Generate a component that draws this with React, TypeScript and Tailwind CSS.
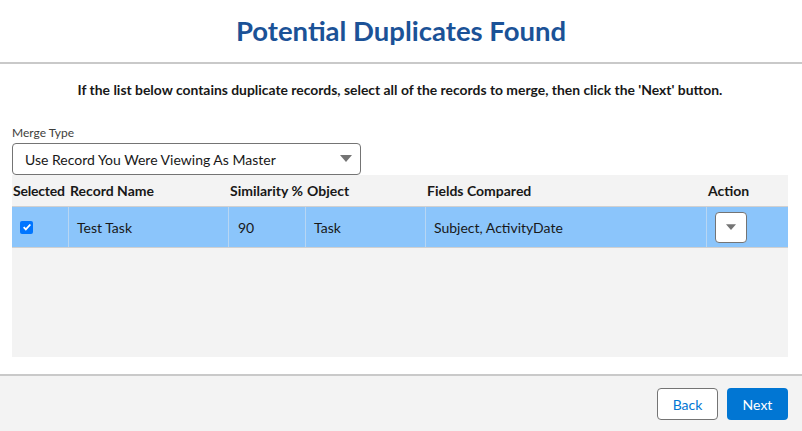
import React, { useState } from "react";

function Caret({ className = "" }: { className?: string }) {
  return (
    <svg viewBox="0 0 12 8" className={className}>
      <path d="M0 0h12L6 7z" fill="#747474" />
    </svg>
  );
}

export default function App() {
  const [selected, setSelected] = useState(true);

  return (
    <div className="w-[802px] h-[431px] flex flex-col bg-white text-[#181818] font-['Lato',sans-serif]">
      {/* Header */}
      <div className="h-[64px] flex items-center justify-center border-b-2 border-[#c9c9c9] shrink-0">
        <h1 className="text-[27.5px] font-bold text-[#1b5297] leading-none">
          Potential Duplicates Found
        </h1>
      </div>

      {/* Body */}
      <div className="flex-1 flex flex-col pl-[12px] pr-[14px]">
        <p className="text-[13.9px] font-bold text-center mt-[18px] mb-[28px] leading-[16px]">
          If the list below contains duplicate records, select all of the records to merge, then click the 'Next' button.
        </p>

        <label className="text-[12px] text-[#3e3e3c] leading-[14px] mb-[3px]">Merge Type</label>
        <div className="w-[349px] h-[32px] border border-[#747474] rounded-[4px] flex items-center justify-between pl-[12px] pr-[8px]">
          <span className="text-[14px]">Use Record You Were Viewing As Master</span>
          <Caret className="w-[12px] h-[8px]" />
        </div>

        {/* Table */}
        <div className="h-[182px] bg-[#f3f3f3]">
          <div className="h-[32px] grid grid-cols-[57px_160px_77px_120px_281px_1fr] items-center text-[14px] font-bold border-b border-[#d0d0d0]">
            <div className="pl-[1px] tracking-[-0.2px]">Selected</div>
            <div className="pl-[1px]">Record Name</div>
            <div className="pl-[1px] whitespace-nowrap">Similarity %</div>
            <div className="pl-[1px]">Object</div>
            <div className="pl-[1px]">Fields Compared</div>
            <div className="pl-[1px]">Action</div>
          </div>
          <div className="h-[41px] grid grid-cols-[57px_160px_77px_120px_281px_1fr] bg-[#8bc5fb] border-b border-[#d0d0d0] text-[14px]">
            <div className="flex items-center pl-[8px] border-r border-[#b7d6f3]">
              <button
                onClick={() => setSelected(!selected)}
                className={`w-[13px] h-[13px] rounded-[2px] flex items-center justify-center ${selected ? "bg-[#0075ff]" : "bg-white border border-[#767676]"}`}
              >
                {selected && (
                  <svg viewBox="0 0 12 12" className="w-[10px] h-[10px]">
                    <path d="M2 6.2l2.6 2.6L10 3" fill="none" stroke="white" strokeWidth="2.2" />
                  </svg>
                )}
              </button>
            </div>
            <div className="flex items-center pl-[8px] border-r border-[#b7d6f3]">Test Task</div>
            <div className="flex items-center pl-[9px] border-r border-[#b7d6f3]">90</div>
            <div className="flex items-center pl-[8px] border-r border-[#b7d6f3]">Task</div>
            <div className="flex items-center pl-[8px] border-r border-[#b7d6f3]">Subject, ActivityDate</div>
            <div className="flex items-center pl-[8px]">
              <button className="w-[32px] h-[31px] bg-white border border-[#747474] rounded-[4px] flex items-center justify-center">
                <Caret className="w-[10px] h-[7px]" />
              </button>
            </div>
          </div>
        </div>
      </div>

      {/* Footer */}
      <div className="h-[57px] shrink-0 bg-[#f3f3f3] border-t-2 border-[#c9c9c9] flex items-start justify-end gap-[9px] pt-[12px] pr-[14px]">
        <button className="h-[32px] w-[61px] bg-white border border-[#747474] rounded-[4px] text-[14px] text-[#0176d3]">
          Back
        </button>
        <button className="h-[32px] w-[61px] bg-[#0176d3] rounded-[4px] text-[14px] text-white">
          Next
        </button>
      </div>
    </div>
  );
}
